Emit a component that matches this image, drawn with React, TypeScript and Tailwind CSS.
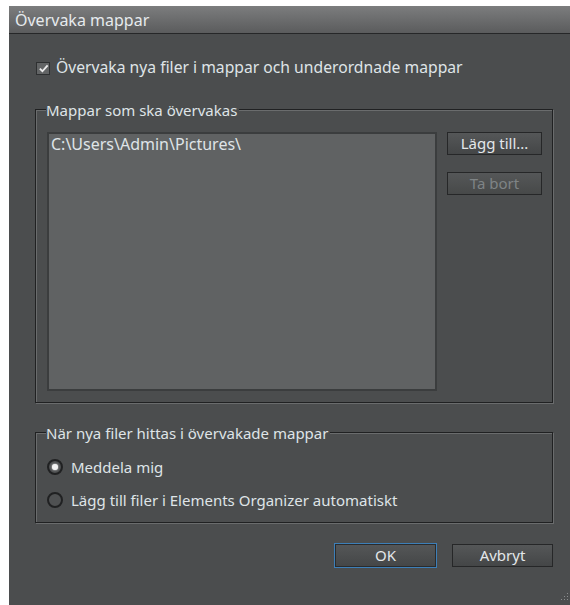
import type { ReactNode } from "react";

const FONT = { fontFamily: '"Noto Sans", "Open Sans", sans-serif' };

function GroupBox({
  title,
  className,
  children,
}: {
  title: string;
  className?: string;
  children: ReactNode;
}) {
  return (
    <div
      className={`relative border border-[#202122] shadow-[1px_1px_0_#6a6c6d,inset_1px_1px_0_#6a6c6d] ${className ?? ""}`}
    >
      <span className="absolute left-[10px] top-0 -translate-y-1/2 bg-[#4b4d4e] pr-[2px] text-[15px] leading-[18px] text-[#dfe4e7]">
        {title}
      </span>
      {children}
    </div>
  );
}

function Button({
  label,
  disabled,
  focused,
  className,
}: {
  label: string;
  disabled?: boolean;
  focused?: boolean;
  className?: string;
}) {
  return (
    <button
      disabled={disabled}
      className={`flex items-center justify-center border bg-gradient-to-b from-[#555758] to-[#444647] text-[15px] leading-none ${
        focused
          ? "border-[#3d7fb8] shadow-[inset_0_0_0_1px_#2a2b2c]"
          : "border-[#262728]"
      } ${disabled ? "border-[#3c3e3f] from-[#4f5152] to-[#474949] text-[#7f8486]" : "text-[#e3e7ea]"} ${className ?? ""}`}
    >
      {label}
    </button>
  );
}

function Radio({ checked, label }: { checked?: boolean; label: string }) {
  return (
    <label className="flex h-[16px] items-center gap-[8px]">
      <span className="flex h-[16px] w-[16px] shrink-0 items-center justify-center rounded-full border-2 border-[#202122] bg-[#4f5152]">
        {checked && (
          <span className="h-[6px] w-[6px] rounded-full bg-[#f2f2f2] shadow-[0_0_2px_#ffffff]" />
        )}
      </span>
      <span className="text-[15px] text-[#dfe4e7]">{label}</span>
    </label>
  );
}

export default function App() {
  return (
    <div className="h-[605px] w-[570px] bg-white pl-[9px] pt-[6px]" style={FONT}>
      <div className="relative flex h-[599px] w-[561px] flex-col bg-[#4b4d4e]">
        {/* title bar */}
        <div className="flex h-[28px] items-center border-b border-[#262728] bg-gradient-to-b from-[#7c7d7e] to-[#5b5c5d] pl-[6px] pt-[1px] text-[16px] text-[#e6eaed]">
          Övervaka mappar
        </div>

        <div className="flex flex-col pl-[26px] pr-[17px]">
          <label className="mt-[24px] flex h-[20px] items-center gap-[6px] pl-[1px]">
            <span className="flex h-[13px] w-[14px] shrink-0 items-center justify-center border border-[#2e3031] bg-[#626465]">
              <svg viewBox="0 0 12 12" className="h-[11px] w-[11px]">
                <path
                  d="M2 6.2 L4.8 9 L10.5 2.5"
                  fill="none"
                  stroke="#ececec"
                  strokeWidth="2"
                />
              </svg>
            </span>
            <span className="text-[15.7px] text-[#dfe4e7]">
              Övervaka nya filer i mappar och underordnade mappar
            </span>
          </label>

          <GroupBox title="Mappar som ska övervakas" className="mt-[31px] h-[294px]">
            <div className="flex gap-[10px] pl-[11px] pr-[10px] pt-[22px]">
              <div className="h-[259px] w-[390px] border-2 border-[#3b3d3e] bg-[#606263] px-[2px] pt-[1px] text-[16px] leading-[18px] text-[#dfe4e7]">
                C:\Users\Admin\Pictures\
              </div>
              <div className="flex flex-col gap-[17px]">
                <Button label="Lägg till..." className="h-[23px] w-[95px]" />
                <Button label="Ta bort" disabled className="h-[23px] w-[95px]" />
              </div>
            </div>
          </GroupBox>

          <GroupBox
            title="När nya filer hittas i övervakade mappar"
            className="mt-[29px] h-[91px]"
          >
            <div className="flex flex-col gap-[17px] pl-[11px] pt-[26px]">
              <Radio checked label="Meddela mig" />
              <Radio label="Lägg till filer i Elements Organizer automatiskt" />
            </div>
          </GroupBox>

          <div className="mt-[20px] flex justify-end gap-[15px]">
            <Button label="OK" focused className="h-[25px] w-[103px]" />
            <Button label="Avbryt" className="mt-[1px] h-[23px] w-[101px]" />
          </div>
        </div>

        {/* resize grip */}
        <svg
          viewBox="0 0 8 8"
          className="absolute bottom-[4px] right-[1px] h-[8px] w-[8px]"
        >
          <rect x="6" y="0" width="1" height="1" fill="#8a8c8d" />
          <rect x="3" y="3" width="1" height="1" fill="#8a8c8d" />
          <rect x="6" y="3" width="1" height="1" fill="#8a8c8d" />
          <rect x="0" y="6" width="1" height="1" fill="#8a8c8d" />
          <rect x="3" y="6" width="1" height="1" fill="#8a8c8d" />
          <rect x="6" y="6" width="1" height="1" fill="#8a8c8d" />
        </svg>
      </div>
    </div>
  );
}
